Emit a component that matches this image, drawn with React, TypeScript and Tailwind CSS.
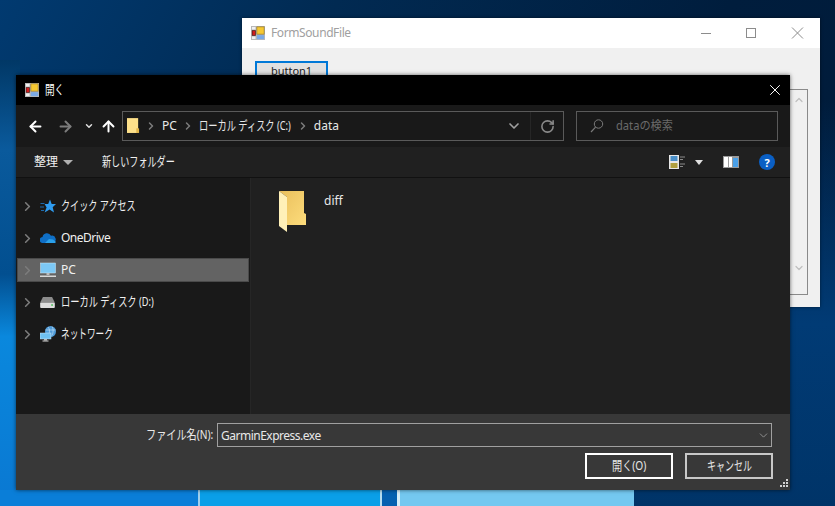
import { ChevronRight, ChevronDown, ArrowLeft, ArrowRight, ArrowUp, RotateCw, X } from "lucide-react";

const ui = { fontFamily: '"Noto Sans", "Noto Sans CJK JP", sans-serif' };

function AppIcon({ className }: { className: string }) {
  return (
    <svg viewBox="0 0 14 14" className={className}>
      <rect x="0" y="0" width="14" height="14" fill="#b8b8b8" />
      <rect x="1" y="1" width="3.5" height="2.5" fill="#f0f0f0" />
      <rect x="0.8" y="4.2" width="4" height="5.6" fill="#5a1a1a" />
      <rect x="1.6" y="5" width="2.4" height="4" fill="#d01c1c" />
      <rect x="1" y="10.5" width="3.5" height="2.5" fill="#efefef" />
      <rect x="5.5" y="0.5" width="8" height="8" fill="#9a7a20" />
      <rect x="6.2" y="1.2" width="6.6" height="6.6" fill="#f6c832" />
      <rect x="5.8" y="9.2" width="7.4" height="4" fill="#7aa9e6" />
    </svg>
  );
}

function FolderSmall() {
  return (
    <svg viewBox="0 0 14 17" className="w-[13px] h-[16px]">
      <rect x="0" y="0" width="12" height="16" fill="#fde08a" />
      <rect x="10" y="11" width="3" height="5" fill="#e2b64a" />
    </svg>
  );
}

function FolderBig() {
  return (
    <svg viewBox="0 0 27 41" className="w-[27px] h-[41px]">
      <defs>
        <linearGradient id="fb" x1="0" y1="0" x2="1" y2="1">
          <stop offset="0" stopColor="#e9bf5c" />
          <stop offset="1" stopColor="#fddc7c" />
        </linearGradient>
      </defs>
      <path d="M0 0H25V22L27 23V34H8V6Z" fill="url(#fb)" />
      <path d="M0 0L8 6V41L0 35Z" fill="#fff0b8" />
    </svg>
  );
}

const NavItem = ({ icon, children, active }: { icon: React.ReactNode; children: React.ReactNode; active?: boolean }) => (
  <div className={`h-[24px] mb-[8px] ml-px mr-px flex items-center ${active ? "bg-[#636363] shadow-[inset_0_0_0_1px_#4a4a4a]" : ""}`}>
    <ChevronRight className="w-[15px] h-[15px] ml-[3px] text-[#7c7c7c]" strokeWidth={2.5} />
    <div className="w-[17px] h-[17px] ml-[4px] flex items-center justify-center">{icon}</div>
    <div className="ml-[5px] text-[12px] text-[#f0f0f0] whitespace-nowrap">{children}</div>
  </div>
);

export default function App() {
  return (
    <div className="relative w-[835px] h-[506px] overflow-hidden bg-[#00213f]" style={ui}>
      {/* wallpaper */}
      <div className="absolute inset-0 bg-[linear-gradient(120deg,#013a70_0%,#012a52_30%,#001d3d_65%,#001a38_100%)]" />
      <div className="absolute left-[634px] top-[100px] bottom-0 right-0 bg-[linear-gradient(180deg,#001f4200_0%,#013b75_55%,#003468_100%)]" />
      <div className="absolute left-0 top-[60px] w-[20px] h-[446px] bg-[linear-gradient(180deg,#013866_0%,#0a5a9c_20%,#024f90_48%,#0a88dd_62%,#0a78d2_100%)]" />
      <div className="absolute left-0 bottom-0 w-[634px] h-[16px] bg-[#0a7ed8]">
        <div className="absolute left-[198px] top-0 w-[2px] h-full bg-[#9fd0ee]" />
        <div className="absolute left-[200px] top-0 w-[180px] h-full bg-[#0a9fe8]" />
        <div className="absolute left-[380px] top-0 w-[2px] h-full bg-[#b5dcf0]" />
        <div className="absolute left-[382px] top-0 w-[15px] h-full bg-[#0560b0]" />
        <div className="absolute left-[397px] top-0 w-[3px] h-full bg-[#d6edf8]" />
        <div className="absolute left-[400px] top-0 w-[234px] h-full bg-[#74c8f0]" />
      </div>

      {/* parent form */}
      <div className="absolute left-[242px] top-[18px] w-[578px] h-[289px] bg-[#f0f0f0] shadow-[0_0_3px_rgba(0,0,0,0.5)] flex flex-col">
        <div className="h-[30px] bg-white flex items-center shrink-0">
          <AppIcon className="w-[14px] h-[14px] ml-[9px]" />
          <span className="ml-[6px] text-[12px] tracking-[-0.4px] text-[#a0a0a0]">FormSoundFile</span>
          <svg viewBox="0 0 112 14" className="ml-auto mr-[16px] w-[112px] h-[14px] text-[#8c8c8c]" fill="none" stroke="currentColor">
            <path d="M9 7.5H19" />
            <rect x="54.5" y="2.5" width="9" height="9" />
            <path d="M100 1.5L111 12.5M111 1.5L100 12.5" />
          </svg>
        </div>
        <div className="mt-[13px] ml-[13px] w-[73px] h-[24px] border-2 border-[#0078d7] bg-[#e1e1e1] text-[11px] text-[#222] text-center">button1</div>
      </div>
      <div className="absolute left-[790px] top-[89px] w-[18px] h-[206px] border border-l-0 border-[#8a8a8a] bg-[#f0f0f0] flex flex-col items-center justify-between py-[4px] text-[#c0c0c0]">
        <ChevronDown className="w-[12px] h-[12px] rotate-180" strokeWidth={2.5} />
        <ChevronDown className="w-[12px] h-[12px] mb-[16px]" strokeWidth={2.5} />
      </div>

      {/* open file dialog */}
      <div className="absolute left-[16px] top-[75px] w-[774px] h-[415px] flex flex-col bg-[#202020] shadow-[0_0_4px_rgba(0,0,0,0.6)]">
        <div className="h-[30px] bg-black flex items-center shrink-0">
          <AppIcon className="w-[14px] h-[14px] ml-[9px]" />
          <span className="ml-[6px] inline-block w-[19px] origin-left scale-x-[0.74] whitespace-nowrap text-[13px] text-white">開く</span>
          <X className="w-[18px] h-[18px] ml-auto mr-[6px] text-white" strokeWidth={1.3} />
        </div>

        <div className="h-[42px] bg-[#191919] flex items-center shrink-0">
          <ArrowLeft className="w-[17px] h-[17px] ml-[11px] text-white" strokeWidth={2.8} />
          <ArrowRight className="w-[17px] h-[17px] ml-[13px] text-[#7c7c7c]" strokeWidth={2.8} />
          <ChevronDown className="w-[10px] h-[10px] ml-[10px] text-[#e0e0e0]" strokeWidth={3.5} />
          <ArrowUp className="w-[17px] h-[17px] ml-[6px] text-white" strokeWidth={2.8} />
          <div className="ml-[5px] w-[442px] h-[30px] border border-[#5a5a5a] flex items-center text-[12px] text-[#e8e8e8]">
            <div className="ml-[4px]"><FolderSmall /></div>
            <ChevronRight className="w-[12px] h-[12px] ml-[5px] text-[#7c7c7c]" strokeWidth={3} />
            <span className="ml-[5px]">PC</span>
            <ChevronRight className="w-[12px] h-[12px] ml-[5px] text-[#7c7c7c]" strokeWidth={3} />
            <span className="ml-[5px] inline-block w-[93px] origin-left scale-x-[0.71] whitespace-nowrap text-[13px]">ローカル ディスク (C:)</span>
            <ChevronRight className="w-[12px] h-[12px] ml-[5px] text-[#7c7c7c]" strokeWidth={3} />
            <span className="ml-[5px]">data</span>
            <ChevronDown className="w-[16px] h-[16px] ml-auto text-[#a0a0a0]" strokeWidth={2.5} />
            <div className="ml-[8px] w-[33px] h-full border-l border-[#262626] flex items-center justify-center">
              <RotateCw className="w-[15px] h-[15px] text-[#8a8a8a]" strokeWidth={2.5} />
            </div>
          </div>
          <div className="ml-[12px] w-[202px] h-[30px] border border-[#5a5a5a] flex items-center text-[12px] text-[#6a6a6a]">
            <svg viewBox="0 0 14 14" className="w-[14px] h-[14px] ml-[13px] text-[#7a7a7a]" fill="none" stroke="currentColor">
              <circle cx="8.5" cy="5" r="4.2" />
              <path d="M5.6 8.2L1 13" strokeWidth="1.2" />
            </svg>
            <span className="ml-[12px] inline-block w-[57px] origin-left scale-x-[0.93] whitespace-nowrap">dataの検索</span>
          </div>
        </div>

        <div className="h-[31px] bg-[#202020] border-b border-[#111] flex items-center text-[12px] text-[#f0f0f0] shrink-0">
          <span className="ml-[18px]">整理</span>
          <div className="ml-[5px] w-0 h-0 border-x-[5px] border-x-transparent border-t-[5px] border-t-[#b0b0b0]" />
          <span className="ml-[29px] inline-block w-[73px] origin-left scale-x-[0.7] whitespace-nowrap text-[13px]">新しいフォルダー</span>
          <svg viewBox="0 0 16 14" className="ml-auto w-[16px] h-[14px]">
            <rect x="0" y="0" width="10" height="14" fill="#e8e8e8" />
            <rect x="1.5" y="1" width="7" height="5" fill="#4a8fc8" />
            <rect x="1.5" y="8" width="7" height="5" fill="#b0a040" />
            <path d="M11 2h5M11 4.5h3M11 9h5M11 11.5h3" stroke="#8a8a8a" />
          </svg>
          <div className="ml-[10px] w-0 h-0 border-x-[4px] border-x-transparent border-t-[5px] border-t-[#e0e0e0]" />
          <svg viewBox="0 0 16 12" className="ml-[20px] w-[16px] h-[12px]">
            <rect width="16" height="12" fill="#9a9a9a" />
            <rect x="1" y="1" width="4" height="10" fill="#fff" />
            <rect x="6" y="1" width="3" height="10" fill="#fff" />
            <rect x="10" y="2" width="5" height="9" fill="#4aa0e8" />
          </svg>
          <div className="ml-[20px] mr-[15px] w-[16px] h-[16px] rounded-full bg-[#0a5fc4] text-white text-[11px] font-bold flex items-center justify-center leading-none">?</div>
        </div>

        <div className="flex-1 flex min-h-0">
          <div className="w-[234px] bg-[#191919] pt-[16px] shrink-0">
            <NavItem icon={
              <svg viewBox="0 0 16 15" className="w-[16px] h-[15px]">
                <path d="M10 0.5l1.7 4.6H16l-3.3 3.1 1.3 5.3-4.4-2.9-5 2.9 2-5-2-3.4h3.6z" fill="#2f9cf0" />
                <path d="M0.5 4.5h4M0 8h4M1 11.5h3" stroke="#1f7fd0" strokeWidth="0.8" />
              </svg>
            }><span className="inline-block w-[75px] origin-left scale-x-[0.7] whitespace-nowrap text-[13px]">クイック アクセス</span></NavItem>
            <NavItem icon={
              <svg viewBox="0 0 16 10" className="w-[16px] h-[10px]"><path d="M3 10a3 3 0 0 1-.5-6A4.5 4.5 0 0 1 11 2.8 3.5 3.5 0 0 1 13 10z" fill="#0f6fc6" /><path d="M5 10l4-4 4 .5 3 2.5-1 1z" fill="#2aa0ea" /></svg>
            }><span className="tracking-[-0.5px]">OneDrive</span></NavItem>
            <NavItem active icon={
              <svg viewBox="0 0 16 16" className="w-[16px] h-[16px]"><rect x="0.5" y="1" width="15" height="10" fill="#7cc8f5" stroke="#cfe9f8" strokeWidth="0.5" /><rect x="6.5" y="11" width="3" height="2" fill="#bdbdbd" /><rect x="0" y="13.5" width="16" height="1.5" fill="#d8d8d8" /></svg>
            }>PC</NavItem>
            <NavItem icon={
              <svg viewBox="0 0 16 12" className="w-[15px] h-[11px]"><path d="M3 0h10l3 6H0z" fill="#8c8c8c" /><rect x="0" y="6" width="16" height="6" rx="1" fill="#dcdcdc" /><rect x="12" y="8" width="2" height="1.5" fill="#3fbf4f" /></svg>
            }><span className="inline-block w-[93px] origin-left scale-x-[0.71] whitespace-nowrap text-[13px]">ローカル ディスク (D:)</span></NavItem>
            <NavItem icon={
              <svg viewBox="0 0 16 16" className="w-[16px] h-[16px]"><circle cx="10.5" cy="5.5" r="5.5" fill="#4f9bd8" /><path d="M8 1c2 2 2 6 0 9M5.5 4h10M12 .5c1.5 2 1.5 6 0 9" stroke="#cfe6f6" strokeWidth="0.6" fill="none" /><rect x="0" y="7" width="11" height="6" fill="#6fc0f0" stroke="#d0e8f8" strokeWidth="0.5" /><rect x="4" y="13" width="3" height="1.5" fill="#bdbdbd" /><rect x="2.5" y="14.5" width="6" height="1" fill="#d8d8d8" /></svg>
            }><span className="inline-block w-[52px] origin-left scale-x-[0.665] whitespace-nowrap text-[13px]">ネットワーク</span></NavItem>
          </div>
          <div className="w-px bg-[#262626] shrink-0" />
          <div className="flex-1 bg-[#202020] flex items-start pt-[13px] pl-[28px]">
            <FolderBig />
            <span className="ml-[18px] mt-[1px] text-[12px] text-[#e8e8e8]">diff</span>
          </div>
        </div>

        <div className="relative h-[76px] bg-[#383838] shrink-0">
          <div className="flex items-center mt-[9px] h-[24px] text-[12px] text-[#e8e8e8]">
            <span className="ml-[130px] inline-block w-[67px] origin-left scale-x-[0.78] whitespace-nowrap text-[13px]">ファイル名(N):</span>
            <div className="ml-[4px] w-[555px] h-[24px] border border-[#a0a0a0] flex items-center pl-[3px] pt-px tracking-[-0.5px]">
              GarminExpress.exe
              <ChevronDown className="w-[13px] h-[13px] ml-auto mr-[1px] text-[#a0a0a0]" strokeWidth={1.5} />
            </div>
          </div>
          <div className="flex justify-end mt-[6px] mr-[17px] gap-[12px] text-[13px] text-[#e8e8e8]">
            <div className="w-[88px] h-[26px] border-2 border-white flex items-center justify-center">
              <span className="inline-block w-[34px] origin-left scale-x-[0.78] whitespace-nowrap">開く(O)</span>
            </div>
            <div className="w-[88px] h-[26px] border-2 border-[#c8c8c8] flex items-center justify-center">
              <span className="inline-block w-[45px] origin-left scale-x-[0.69] whitespace-nowrap">キャンセル</span>
            </div>
          </div>
          <svg viewBox="0 0 9 9" className="absolute right-[1px] bottom-[2px] w-[9px] h-[9px]">
            <path d="M6 0h2v2H6zM3 3h2v2H3zM6 3h2v2H6zM0 6h2v2H0zM3 6h2v2H3zM6 6h2v2H6z" fill="#d0d0d0" />
          </svg>
        </div>
      </div>
    </div>
  );
}
